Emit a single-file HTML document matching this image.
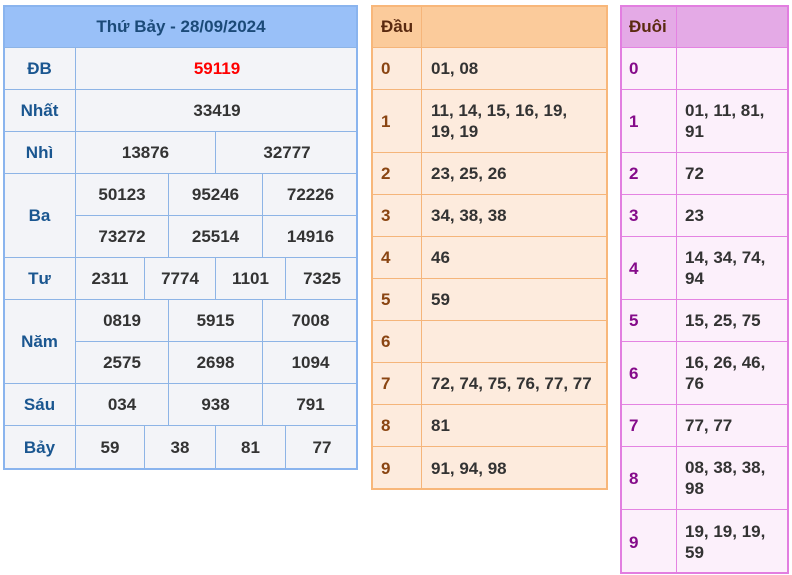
<!DOCTYPE html><html><head><meta charset="utf-8"><style>
body{margin:0;width:792px;height:575px;background:#fff;position:relative;font-family:"Liberation Sans",sans-serif;font-weight:bold;font-size:17px;overflow:hidden}
.c{position:absolute;box-sizing:border-box;display:flex;align-items:center;border-left:1px solid;border-top:1px solid;line-height:21px}
.a .c{border-color:#8db4e6;background:#f3f4f8;justify-content:center;color:#333}
.a .l{color:#1a5690}
.a .h{background:#99c0f8;color:#1b4a78}
.b .c{border-color:#f5b57a;background:#fdebdd;color:#333;padding-left:9px}
.b .l{color:#8a4512}
.b .h{background:#fbcb9b;color:#5a2a10}
.d .c{border-color:#e483e2;background:#fcf0fb;color:#333;padding-left:8px}
.d .l{color:#850b8a}
.d .h{background:#e4aae6;color:#5a2a10}
.f{position:absolute;box-sizing:border-box;border:2px solid}
</style></head><body>
<div class="a">
<div class="c h" style="left:3px;top:5px;width:355px;height:42px">Thứ Bảy - 28/09/2024</div>
<div class="c l" style="left:3px;top:47px;width:72px;height:42px">ĐB</div>
<div class="c" style="left:75px;top:47px;width:283px;height:42px;color:#f00">59119</div>
<div class="c l" style="left:3px;top:89px;width:72px;height:42px">Nhất</div>
<div class="c" style="left:75px;top:89px;width:283px;height:42px">33419</div>
<div class="c l" style="left:3px;top:131px;width:72px;height:42px">Nhì</div>
<div class="c" style="left:75px;top:131px;width:140px;height:42px">13876</div>
<div class="c" style="left:215px;top:131px;width:143px;height:42px">32777</div>
<div class="c l" style="left:3px;top:173px;width:72px;height:84px">Ba</div>
<div class="c" style="left:75px;top:173px;width:93px;height:42px">50123</div>
<div class="c" style="left:168px;top:173px;width:94px;height:42px">95246</div>
<div class="c" style="left:262px;top:173px;width:96px;height:42px">72226</div>
<div class="c" style="left:75px;top:215px;width:93px;height:42px">73272</div>
<div class="c" style="left:168px;top:215px;width:94px;height:42px">25514</div>
<div class="c" style="left:262px;top:215px;width:96px;height:42px">14916</div>
<div class="c l" style="left:3px;top:257px;width:72px;height:42px">Tư</div>
<div class="c" style="left:75px;top:257px;width:69px;height:42px">2311</div>
<div class="c" style="left:144px;top:257px;width:71px;height:42px">7774</div>
<div class="c" style="left:215px;top:257px;width:70px;height:42px">1101</div>
<div class="c" style="left:285px;top:257px;width:73px;height:42px">7325</div>
<div class="c l" style="left:3px;top:299px;width:72px;height:84px">Năm</div>
<div class="c" style="left:75px;top:299px;width:93px;height:42px">0819</div>
<div class="c" style="left:168px;top:299px;width:94px;height:42px">5915</div>
<div class="c" style="left:262px;top:299px;width:96px;height:42px">7008</div>
<div class="c" style="left:75px;top:341px;width:93px;height:42px">2575</div>
<div class="c" style="left:168px;top:341px;width:94px;height:42px">2698</div>
<div class="c" style="left:262px;top:341px;width:96px;height:42px">1094</div>
<div class="c l" style="left:3px;top:383px;width:72px;height:42px">Sáu</div>
<div class="c" style="left:75px;top:383px;width:93px;height:42px">034</div>
<div class="c" style="left:168px;top:383px;width:94px;height:42px">938</div>
<div class="c" style="left:262px;top:383px;width:96px;height:42px">791</div>
<div class="c l" style="left:3px;top:425px;width:72px;height:44px">Bảy</div>
<div class="c" style="left:75px;top:425px;width:69px;height:44px">59</div>
<div class="c" style="left:144px;top:425px;width:71px;height:44px">38</div>
<div class="c" style="left:215px;top:425px;width:70px;height:44px">81</div>
<div class="c" style="left:285px;top:425px;width:73px;height:44px">77</div>
<div class="f" style="left:3px;top:5px;width:355px;height:465px;border-color:#8ab4ee"></div>
</div>
<div class="b">
<div class="c h" style="left:371px;top:5px;width:50px;height:42px">Đầu</div>
<div class="c h" style="left:421px;top:5px;width:187px;height:42px"></div>
<div class="c l" style="left:371px;top:47px;width:50px;height:42px">0</div><div class="c" style="left:421px;top:47px;width:187px;height:42px">01, 08</div>
<div class="c l" style="left:371px;top:89px;width:50px;height:63px">1</div><div class="c" style="left:421px;top:89px;width:187px;height:63px">11, 14, 15, 16, 19,<br>19, 19</div>
<div class="c l" style="left:371px;top:152px;width:50px;height:42px">2</div><div class="c" style="left:421px;top:152px;width:187px;height:42px">23, 25, 26</div>
<div class="c l" style="left:371px;top:194px;width:50px;height:42px">3</div><div class="c" style="left:421px;top:194px;width:187px;height:42px">34, 38, 38</div>
<div class="c l" style="left:371px;top:236px;width:50px;height:42px">4</div><div class="c" style="left:421px;top:236px;width:187px;height:42px">46</div>
<div class="c l" style="left:371px;top:278px;width:50px;height:42px">5</div><div class="c" style="left:421px;top:278px;width:187px;height:42px">59</div>
<div class="c l" style="left:371px;top:320px;width:50px;height:42px">6</div><div class="c" style="left:421px;top:320px;width:187px;height:42px"></div>
<div class="c l" style="left:371px;top:362px;width:50px;height:42px">7</div><div class="c" style="left:421px;top:362px;width:187px;height:42px">72, 74, 75, 76, 77, 77</div>
<div class="c l" style="left:371px;top:404px;width:50px;height:42px">8</div><div class="c" style="left:421px;top:404px;width:187px;height:42px">81</div>
<div class="c l" style="left:371px;top:446px;width:50px;height:44px">9</div><div class="c" style="left:421px;top:446px;width:187px;height:44px">91, 94, 98</div>
<div class="f" style="left:371px;top:5px;width:237px;height:485px;border-color:#f8b77a"></div>
</div>
<div class="d">
<div class="c h" style="left:620px;top:5px;width:56px;height:42px">Đuôi</div>
<div class="c h" style="left:676px;top:5px;width:113px;height:42px"></div>
<div class="c l" style="left:620px;top:47px;width:56px;height:42px">0</div><div class="c" style="left:676px;top:47px;width:113px;height:42px"></div>
<div class="c l" style="left:620px;top:89px;width:56px;height:63px">1</div><div class="c" style="left:676px;top:89px;width:113px;height:63px">01, 11, 81,<br>91</div>
<div class="c l" style="left:620px;top:152px;width:56px;height:42px">2</div><div class="c" style="left:676px;top:152px;width:113px;height:42px">72</div>
<div class="c l" style="left:620px;top:194px;width:56px;height:42px">3</div><div class="c" style="left:676px;top:194px;width:113px;height:42px">23</div>
<div class="c l" style="left:620px;top:236px;width:56px;height:63px">4</div><div class="c" style="left:676px;top:236px;width:113px;height:63px">14, 34, 74,<br>94</div>
<div class="c l" style="left:620px;top:299px;width:56px;height:42px">5</div><div class="c" style="left:676px;top:299px;width:113px;height:42px">15, 25, 75</div>
<div class="c l" style="left:620px;top:341px;width:56px;height:63px">6</div><div class="c" style="left:676px;top:341px;width:113px;height:63px">16, 26, 46,<br>76</div>
<div class="c l" style="left:620px;top:404px;width:56px;height:42px">7</div><div class="c" style="left:676px;top:404px;width:113px;height:42px">77, 77</div>
<div class="c l" style="left:620px;top:446px;width:56px;height:63px">8</div><div class="c" style="left:676px;top:446px;width:113px;height:63px">08, 38, 38,<br>98</div>
<div class="c l" style="left:620px;top:509px;width:56px;height:65px">9</div><div class="c" style="left:676px;top:509px;width:113px;height:65px">19, 19, 19,<br>59</div>
<div class="f" style="left:620px;top:5px;width:169px;height:569px;border-color:#e27ee0"></div>
</div>
</body></html>
